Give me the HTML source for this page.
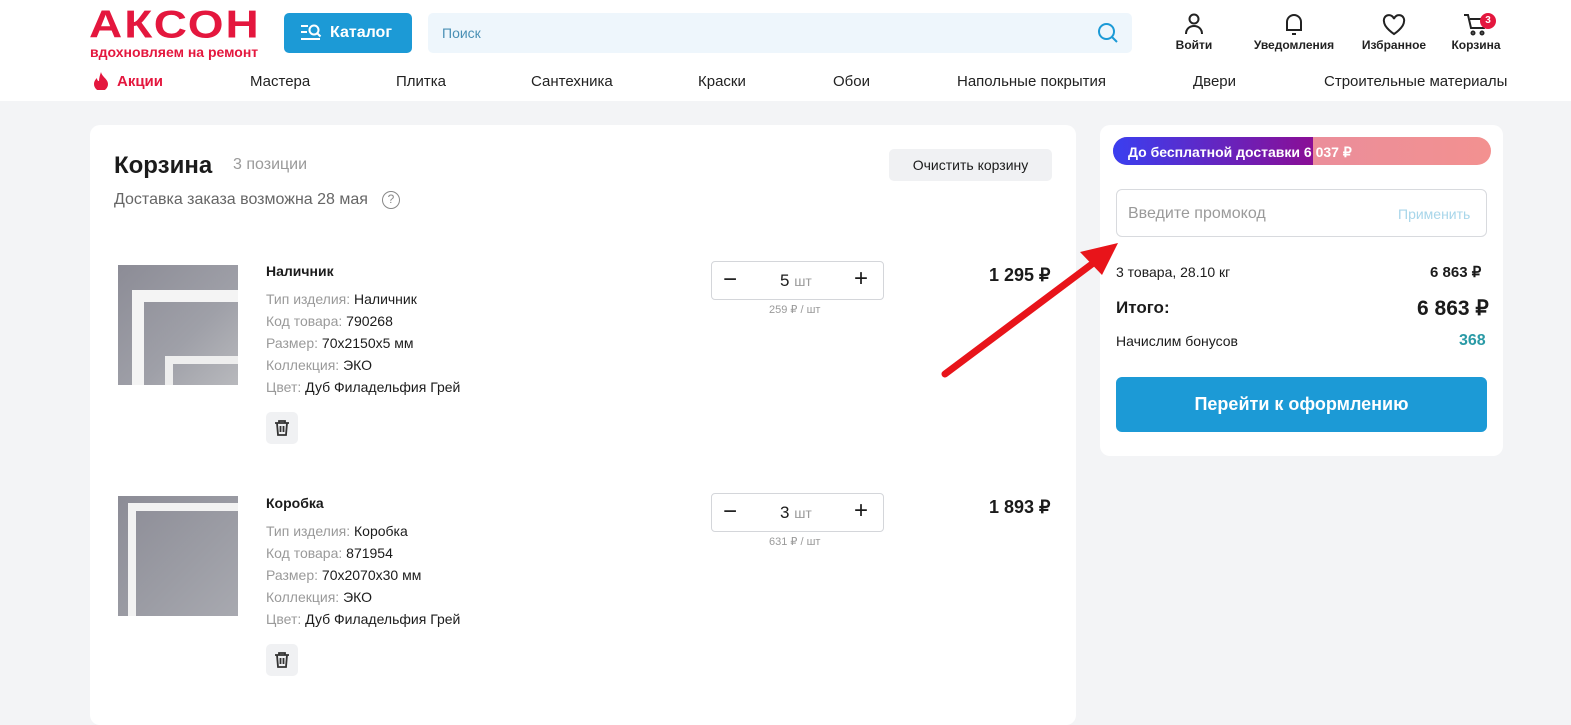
<!DOCTYPE html>
<html><head><meta charset="utf-8"><style>
*{box-sizing:border-box;margin:0;padding:0}
body{width:1571px;height:687px;overflow:hidden;background:#f3f4f6;font-family:"Liberation Sans","Noto Sans CJK SC",sans-serif;color:#1b1b1b;position:relative}
.a{position:absolute}
.hdr{left:0;top:0;width:1571px;height:101px;background:#fff}
.logo{left:89px;top:5px;font-weight:900;font-size:46px;color:#e4173e;letter-spacing:2px;line-height:44px;transform:scaleY(0.85);transform-origin:top left}
.tag{left:90px;top:44px;font-size:14px;font-weight:bold;color:#e4173e}
.cat{left:284px;top:13px;width:128px;height:40px;background:#1c9ad6;border-radius:5px;color:#fff;font-weight:bold;font-size:16px;line-height:40px;padding-left:46px}
.search{left:428px;top:13px;width:704px;height:40px;background:#eef6fc;border-radius:5px;font-size:14px;color:#4a90b5;line-height:40px;padding-left:14px}
.ic{font-size:12px;font-weight:bold;color:#222;text-align:center}
.nav{top:73px;font-size:15px;color:#222}
.card{background:#fff;border-radius:10px}
.gray{color:#9a9a9a}
.prop{font-size:14px;line-height:22px}
.qty{width:173px;height:39px;border:1px solid #d4d6da;border-radius:4px;font-size:17px}
.btn{background:#f0f1f3;border-radius:5px}
</style></head><body>
<div class="a hdr"></div>
<div class="a logo">АКСОН</div>
<div class="a tag">вдохновляем на ремонт</div>
<div class="a cat">Каталог</div>
<svg class="a" style="left:300px;top:23px" width="22" height="20" viewBox="0 0 22 20" fill="none" stroke="#fff" stroke-width="2"><path d="M1 3h7M1 9h6M1 16h19"/><circle cx="14" cy="7" r="4.5"/><path d="M17.5 10.5l3 3"/></svg>
<div class="a search">Поиск</div>
<svg class="a" style="left:1097px;top:22px" width="22" height="22" viewBox="0 0 22 22" fill="none" stroke="#1c9ad6" stroke-width="2"><circle cx="9.5" cy="9.5" r="7.5"/><path d="M15 15l5 5"/></svg>
<svg class="a" style="left:1184px;top:13px" width="20" height="22" viewBox="0 0 20 22" fill="none" stroke="#222" stroke-width="2"><circle cx="10" cy="6" r="4.5"/><path d="M2 21c0-5 3.5-8 8-8s8 3 8 8"/></svg>
<div class="a ic" style="left:1170px;top:38px;width:48px">Войти</div>
<svg class="a" style="left:1284px;top:12px" width="20" height="24" viewBox="0 0 20 24" fill="none" stroke="#222" stroke-width="2"><path d="M3 18V10a7 7 0 0114 0v8H2h16M8 22h4"/></svg>
<div class="a ic" style="left:1248px;top:38px;width:92px">Уведомления</div>
<svg class="a" style="left:1382px;top:14px" width="24" height="22" viewBox="0 0 24 22" fill="none" stroke="#222" stroke-width="2"><path d="M12 20S2 13.5 2 7.5A5 5 0 0112 5a5 5 0 0110 2.5C22 13.5 12 20 12 20z"/></svg>
<div class="a ic" style="left:1356px;top:38px;width:76px">Избранное</div>
<svg class="a" style="left:1463px;top:13px" width="26" height="24" viewBox="0 0 26 24" fill="none" stroke="#222" stroke-width="2"><path d="M1 2h4l3 13h13l2-9H7"/><circle cx="10" cy="20" r="1.5"/><circle cx="19" cy="20" r="1.5"/></svg>
<div class="a" style="left:1480px;top:13px;width:16px;height:16px;border-radius:8px;background:#e4173e;color:#fff;font-size:10px;font-weight:bold;text-align:center;line-height:16px">3</div>
<div class="a ic" style="left:1446px;top:38px;width:60px">Корзина</div>
<svg class="a" style="left:94px;top:72px" width="14" height="18" viewBox="0 0 14 18"><path d="M7 0C8 5 14 7 14 12a7 7 0 01-14 0C0 9 2 7 3 6c0 2 1 3 2 3C5 6 6 3 7 0z" fill="#e4173e"/></svg>
<div class="a nav" style="left:117px;color:#e4173e;font-weight:bold">Акции</div>
<div class="a nav" style="left:250px">Мастера</div>
<div class="a nav" style="left:396px">Плитка</div>
<div class="a nav" style="left:531px">Сантехника</div>
<div class="a nav" style="left:698px">Краски</div>
<div class="a nav" style="left:833px">Обои</div>
<div class="a nav" style="left:957px">Напольные покрытия</div>
<div class="a nav" style="left:1193px">Двери</div>
<div class="a nav" style="left:1324px">Строительные материалы</div>

<div class="a card" style="left:90px;top:125px;width:986px;height:600px"></div>
<div class="a" style="left:114px;top:152px;font-size:24px;font-weight:bold">Корзина</div>
<div class="a gray" style="left:233px;top:156px;font-size:16px">3 позиции</div>
<div class="a btn" style="left:889px;top:149px;width:163px;height:32px;font-size:14px;line-height:32px;text-align:center">Очистить корзину</div>
<div class="a" style="left:114px;top:191px;font-size:16px;color:#666">Доставка заказа возможна 28 мая</div>
<div class="a" style="left:382px;top:191px;width:18px;height:18px;border:1.5px solid #888;border-radius:9px;font-size:12px;color:#888;text-align:center;line-height:15px">?</div>

<!-- item 1 -->
<div class="a" style="left:118px;top:265px;width:120px;height:120px;background:linear-gradient(135deg,#8c8c96 0%,#9fa0a8 60%,#b8b9bd 100%)"></div>
<div class="a" style="left:132px;top:290px;width:106px;height:95px;border-left:12px solid #f4f4f4;border-top:12px solid #f4f4f4"></div>
<div class="a" style="left:165px;top:356px;width:73px;height:29px;border-left:8px solid #eee;border-top:8px solid #eee"></div>
<div class="a" style="left:266px;top:263px;font-size:14px;font-weight:bold">Наличник</div>
<div class="a prop" style="left:266px;top:288px"><span class="gray">Тип изделия:</span> Наличник<br><span class="gray">Код товара:</span> 790268<br><span class="gray">Размер:</span> 70x2150x5 мм<br><span class="gray">Коллекция:</span> ЭКО<br><span class="gray">Цвет:</span> Дуб Филадельфия Грей</div>
<div class="a btn" style="left:266px;top:412px;width:32px;height:32px"></div>
<svg class="a" style="left:273px;top:419px" width="18" height="18" viewBox="0 0 18 18" fill="none" stroke="#333" stroke-width="1.8"><path d="M2 4h14M6 4V2h6v2M4 4l1 12h8l1-12M7.5 7v6M10.5 7v6"/></svg>
<div class="a qty" style="left:711px;top:261px"></div>
<div class="a" style="left:723px;top:270px;font-size:24px;line-height:20px">−</div>
<div class="a" style="left:854px;top:268px;font-size:24px;line-height:22px">+</div>
<div class="a" style="left:780px;top:271px;font-size:17px">5 <span class="gray" style="font-size:14px">шт</span></div>
<div class="a gray" style="left:769px;top:303px;font-size:11px">259 ₽ / шт</div>
<div class="a" style="left:989px;top:265px;font-size:18px;font-weight:bold">1 295 ₽</div>

<!-- item 2 -->
<div class="a" style="left:118px;top:496px;width:120px;height:120px;background:linear-gradient(135deg,#8c8c96 0%,#9c9da5 60%,#a8a9b0 100%)"></div>
<div class="a" style="left:128px;top:503px;width:110px;height:113px;border-left:8px solid #f2f2f2;border-top:8px solid #f2f2f2"></div>
<div class="a" style="left:266px;top:495px;font-size:14px;font-weight:bold">Коробка</div>
<div class="a prop" style="left:266px;top:520px"><span class="gray">Тип изделия:</span> Коробка<br><span class="gray">Код товара:</span> 871954<br><span class="gray">Размер:</span> 70x2070x30 мм<br><span class="gray">Коллекция:</span> ЭКО<br><span class="gray">Цвет:</span> Дуб Филадельфия Грей</div>
<div class="a btn" style="left:266px;top:644px;width:32px;height:32px"></div>
<svg class="a" style="left:273px;top:651px" width="18" height="18" viewBox="0 0 18 18" fill="none" stroke="#333" stroke-width="1.8"><path d="M2 4h14M6 4V2h6v2M4 4l1 12h8l1-12M7.5 7v6M10.5 7v6"/></svg>
<div class="a qty" style="left:711px;top:493px"></div>
<div class="a" style="left:723px;top:502px;font-size:24px;line-height:20px">−</div>
<div class="a" style="left:854px;top:500px;font-size:24px;line-height:22px">+</div>
<div class="a" style="left:780px;top:503px;font-size:17px">3 <span class="gray" style="font-size:14px">шт</span></div>
<div class="a gray" style="left:769px;top:535px;font-size:11px">631 ₽ / шт</div>
<div class="a" style="left:989px;top:497px;font-size:18px;font-weight:bold">1 893 ₽</div>

<!-- summary -->
<div class="a card" style="left:1100px;top:125px;width:403px;height:331px"></div>
<div class="a" style="left:1113px;top:137px;width:378px;height:28px;border-radius:14px;background:linear-gradient(90deg,#e18aa6 0%,#f39190 100%)"></div>
<div class="a" style="left:1113px;top:137px;width:200px;height:28px;border-radius:14px 0 0 14px;background:linear-gradient(90deg,#3a3ff0,#8a0e95)"></div>
<div class="a" style="left:1128px;top:144px;font-size:14px;font-weight:bold;color:#fff">До бесплатной доставки 6 037 ₽</div>
<div class="a" style="left:1116px;top:189px;width:371px;height:48px;border:1px solid #d8dade;border-radius:6px"></div>
<div class="a gray" style="left:1128px;top:205px;font-size:16px">Введите промокод</div>
<div class="a" style="left:1398px;top:206px;font-size:14px;color:#a8d6ea">Применить</div>
<div class="a" style="left:1116px;top:264px;font-size:14px">3 товара, 28.10 кг</div>
<div class="a" style="left:1430px;top:263px;font-size:15px;font-weight:bold">6 863 ₽</div>
<div class="a" style="left:1116px;top:298px;font-size:17px;font-weight:bold">Итого:</div>
<div class="a" style="left:1417px;top:296px;font-size:21px;font-weight:bold">6 863 ₽</div>
<div class="a" style="left:1116px;top:333px;font-size:14px">Начислим бонусов</div>
<div class="a" style="left:1459px;top:332px;font-size:16px;font-weight:bold;color:#2a9aa6">368</div>
<div class="a" style="left:1116px;top:377px;width:371px;height:55px;background:#1c9ad6;border-radius:6px;color:#fff;font-size:18px;font-weight:bold;text-align:center;line-height:55px">Перейти к оформлению</div>

<svg class="a" style="left:930px;top:230px" width="200" height="160" viewBox="0 0 200 160"><path d="M15 144L170 28" stroke="#e8141a" stroke-width="7" stroke-linecap="round"/><path d="M188 13L150 22L172 45Z" fill="#e8141a"/></svg>
</body></html>
